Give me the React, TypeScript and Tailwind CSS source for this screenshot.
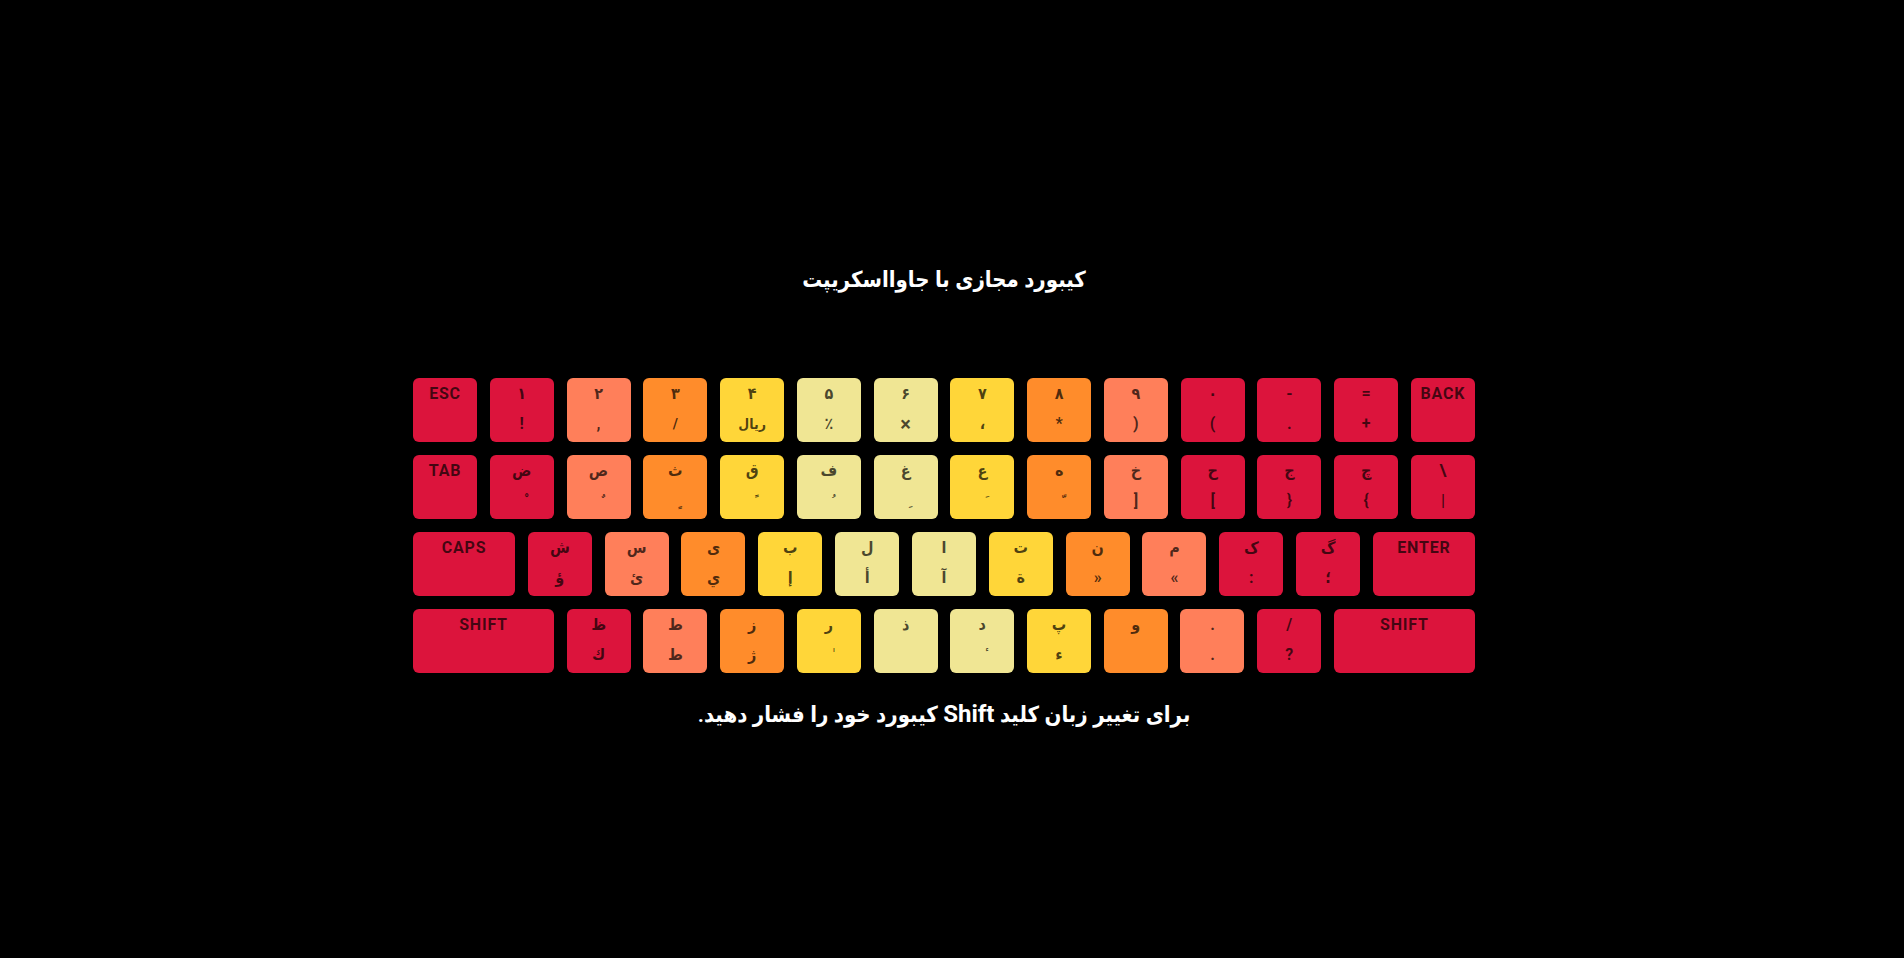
type Tone = 'pinky' | 'ring' | 'middle' | 'index' | 'inner';
type Size = 'unit' | 'wide' | 'wider';
type AltStyle = 'plain' | 'mark' | 'word' | 'large';
type KeyDef = { main: string; alt?: string; altStyle?: AltStyle; tone: Tone; size?: Size };

const tones: Record<Tone, string> = {
  pinky: 'bg-[#dc143c]',
  ring: 'bg-[#ff7f5a]',
  middle: 'bg-[#ff8c2b]',
  index: 'bg-[#ffd639]',
  inner: 'bg-[#f0e694]',
};

const sizes: Record<Size, string> = {
  unit: 'w-16',
  wide: 'w-[102px]',
  wider: 'w-[141px]',
};

const altStyles: Record<AltStyle, string> = {
  plain: '',
  mark: 'pl-2 text-sm leading-[30px]',
  word: 'text-sm leading-[30px]',
  large: 'text-xl leading-[30px]',
};

const key = (main: string, alt: string, tone: Tone, altStyle: AltStyle = 'plain'): KeyDef => ({
  main,
  alt,
  tone,
  altStyle,
});
const control = (main: string, size: Size = 'unit'): KeyDef => ({ main, tone: 'pinky', size });

// Combining marks are carried by a no-break space so they show without a dotted circle.
const marked = (main: string, m: string, tone: Tone): KeyDef =>
  key(main, '\u00a0' + m, tone, 'mark');

const rows: KeyDef[][] = [
  [
    control('ESC'),
    key('۱', '!', 'pinky'),
    key('۲', ',', 'ring'),
    key('۳', '/', 'middle', 'word'),
    key('۴', 'ریال', 'index', 'word'),
    key('۵', '٪', 'inner'),
    key('۶', '×', 'inner', 'large'),
    key('۷', '،', 'index'),
    key('۸', '*', 'middle'),
    key('۹', ')', 'ring'),
    key('۰', '(', 'pinky'),
    key('-', '.', 'pinky'),
    key('=', '+', 'pinky'),
    control('BACK'),
  ],
  [
    control('TAB'),
    marked('ض', '\u0652', 'pinky'),
    marked('ص', '\u064c', 'ring'),
    marked('ث', '\u064d', 'middle'),
    marked('ق', '\u064b', 'index'),
    marked('ف', '\u064f', 'inner'),
    marked('غ', '\u0650', 'inner'),
    marked('ع', '\u064e', 'index'),
    marked('ه', '\u0651', 'middle'),
    key('خ', ']', 'ring'),
    key('ح', '[', 'pinky'),
    key('ج', '}', 'pinky'),
    key('چ', '{', 'pinky'),
    key('\\', '|', 'pinky'),
  ],
  [
    control('CAPS', 'wide'),
    key('ش', 'ؤ', 'pinky'),
    key('س', 'ئ', 'ring'),
    key('ی', 'ي', 'middle'),
    key('ب', 'إ', 'index'),
    key('ل', 'أ', 'inner'),
    key('ا', 'آ', 'inner'),
    key('ت', 'ة', 'index'),
    key('ن', '»', 'middle'),
    key('م', '«', 'ring'),
    key('ک', ':', 'pinky'),
    key('گ', '؛', 'pinky'),
    control('ENTER', 'wide'),
  ],
  [
    control('SHIFT', 'wider'),
    key('ظ', 'ك', 'pinky'),
    key('ط', 'ط', 'ring'),
    key('ز', 'ژ', 'middle'),
    marked('ر', '\u0670', 'index'),
    key('ذ', '', 'inner'),
    marked('د', '\u0654', 'inner'),
    key('پ', 'ء', 'index'),
    key('و', '', 'middle'),
    key('.', '.', 'ring'),
    key('/', '?', 'pinky'),
    control('SHIFT', 'wider'),
  ],
];

function Key({ main, alt, altStyle = 'plain', tone, size = 'unit' }: KeyDef) {
  return (
    <button
      type="button"
      className={`flex h-16 flex-col items-center rounded-md pt-px text-base leading-[30px] font-bold text-black/70 ${sizes[size]} ${tones[tone]}`}
    >
      {alt === undefined ? <span className="tracking-wider">{main}</span> : <span>{main}</span>}
      {alt ? <span className={altStyles[altStyle]}>{alt}</span> : null}
    </button>
  );
}

export default function App() {
  return (
    <main className="flex min-h-screen flex-col items-center justify-center bg-black pt-9 pr-4 font-['Roboto','DejaVu_Sans_Condensed','DejaVu_Sans',sans-serif] text-white">
      <h1 dir="rtl" className="mb-20 text-[22px] leading-9 font-semibold">
        کیبورد مجازی با جاوااسکریپت
      </h1>
      <div className="flex w-full max-w-[1062px] flex-col gap-[13px]">
        {rows.map((row, r) => (
          <div key={r} className="flex justify-between">
            {row.map((k, i) => (
              <Key key={i} {...k} />
            ))}
          </div>
        ))}
      </div>
      <p dir="rtl" className="mt-6 text-[22px] leading-9 font-semibold">
        برای تغییر زبان کلید <span className="text-2xl font-bold">Shift</span> کیبورد خود را فشار دهید.
      </p>
    </main>
  );
}
